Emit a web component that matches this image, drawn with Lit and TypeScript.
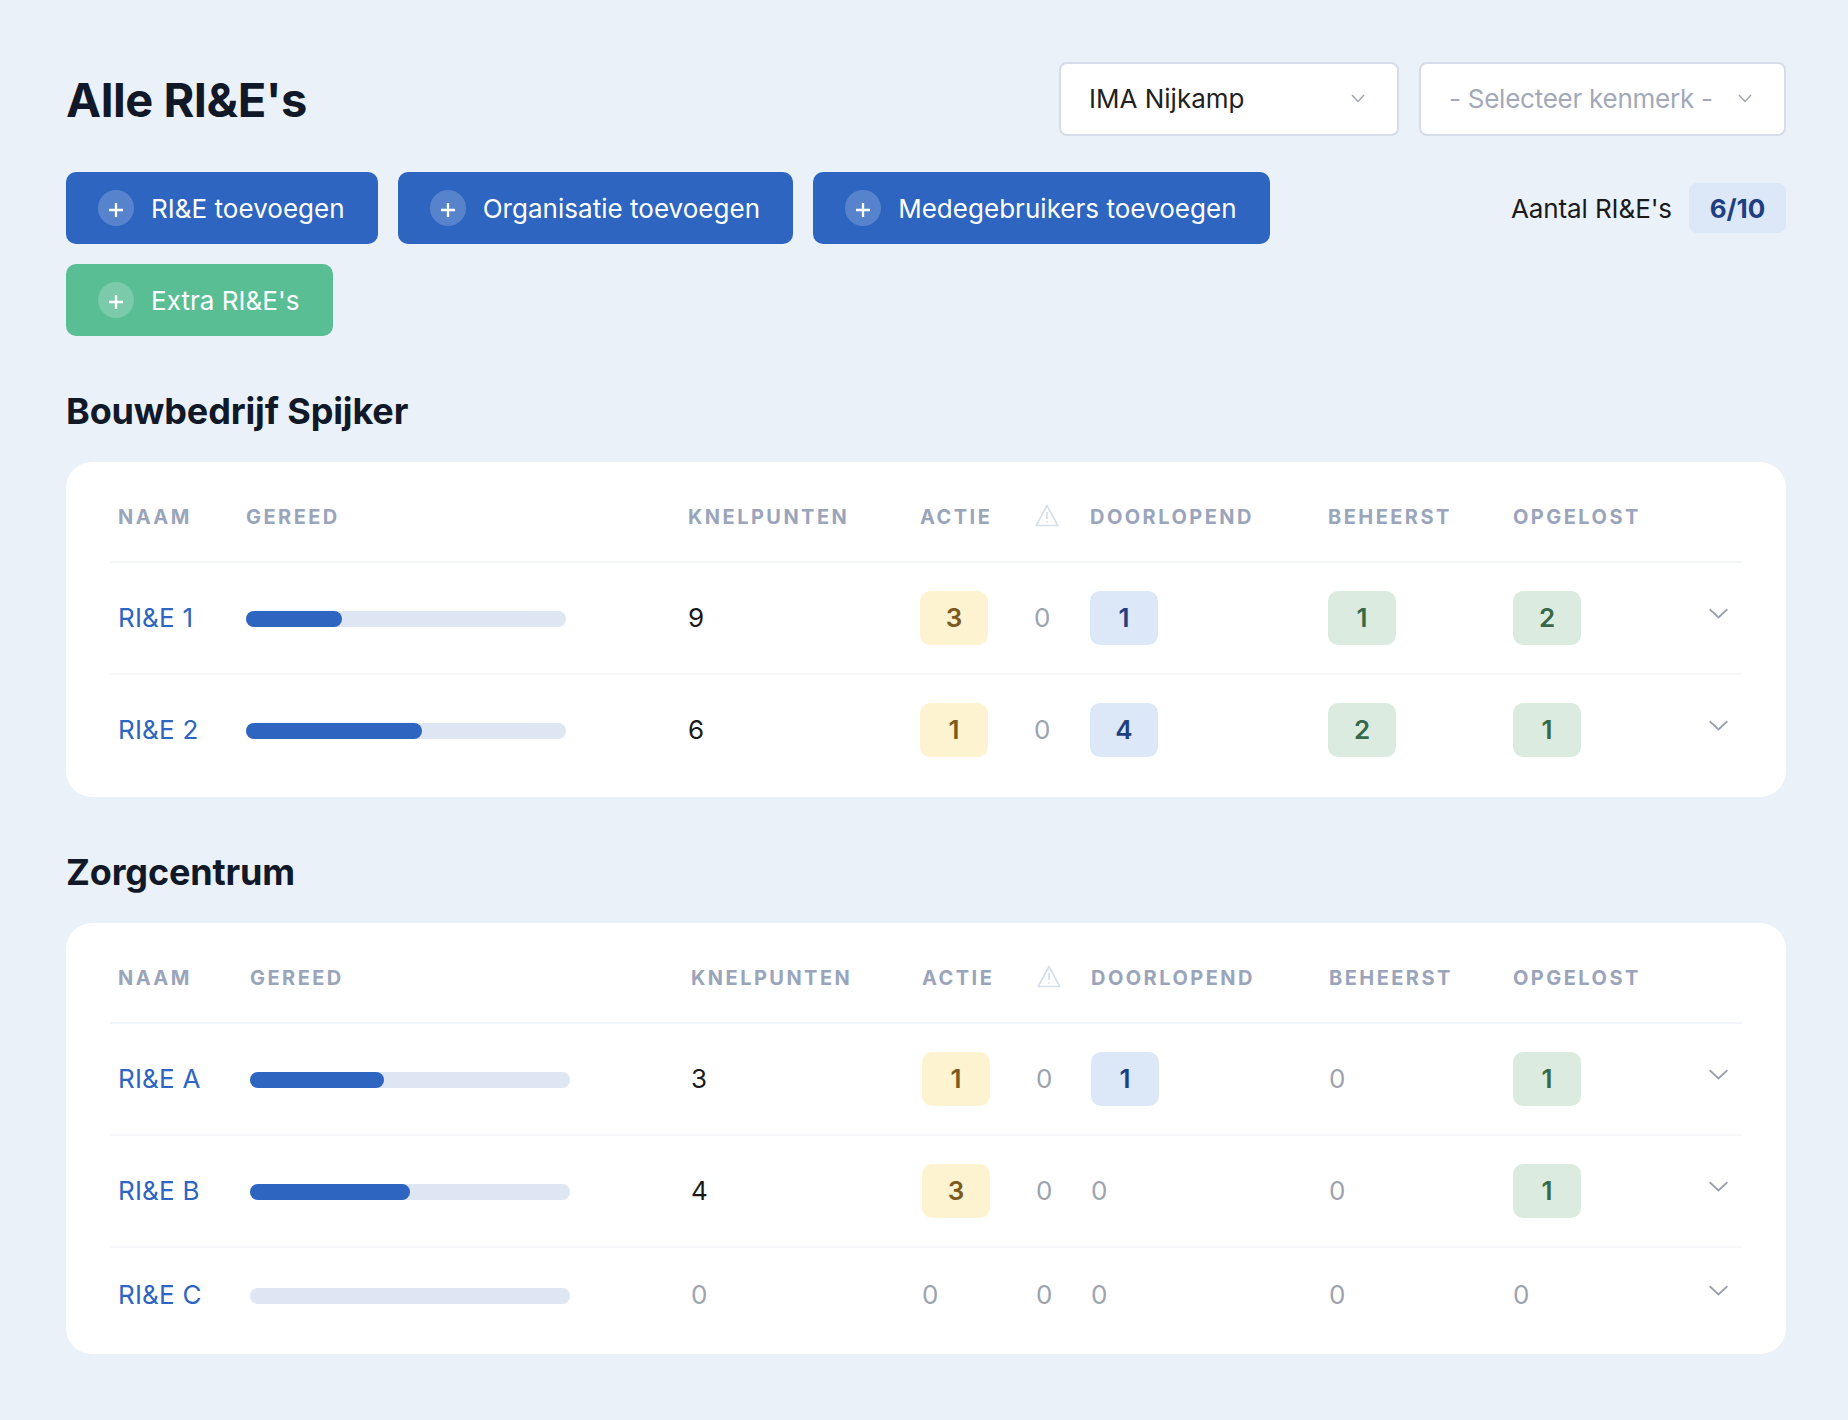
import { LitElement, css, html, nothing } from "lit";
import { customElement, property } from "lit/decorators.js";

type Tone = "yellow" | "blue" | "green";

interface Row {
  name: string;
  progress: number;
  knelpunten: number;
  actie: number;
  warn: number;
  doorlopend: number;
  beheerst: number;
  opgelost: number;
}

const chevron = html`<svg class="chev" viewBox="0 0 20 20" fill="none" stroke="currentColor" stroke-width="1.9">
  <path d="M.7 1.200 9.500 9.500l8.800-8.300" />
</svg>`;

@customElement("rie-table")
export class RieTable extends LitElement {
  static styles = css`
    :host {
      display: block;
      background: #fff;
      border-radius: 26px;
      padding: 9px 44px 12px;
    }

    table {
      width: 100%;
      table-layout: fixed;
      border-collapse: separate;
      border-spacing: 0;
    }

    th {
      height: 88px;
      padding: 2px 0 0 9px;
      text-align: left;
      font-size: 20px;
      font-weight: 700;
      letter-spacing: 2.45px;
      color: #9aa5bb;
      border-bottom: 2px solid #f1f5f9;
      white-space: nowrap;
    }

    th:first-child,
    td:first-child {
      padding-left: 8px;
    }

    td {
      padding: 28px 0 28px 9px;
      font-size: 26px;
      line-height: 38px;
      color: #1a1a1a;
      border-bottom: 2px solid #f7f8fa;
      vertical-align: middle;
    }

    tr:last-child td {
      border-bottom: 0;
    }

    .warn-icon {
      display: block;
      width: 24px;
      height: 23px;
      margin: -3px 0 0 1px;
    }

    td.name {
      color: #2d65c0;
      letter-spacing: 0.2px;
    }

    .bar {
      width: 320px;
      height: 16px;
      margin-top: 2px;
      border-radius: 8px;
      background: #dde6f2;
    }

    .fill {
      height: 100%;
      border-radius: 8px;
      background: #2d65c0;
    }

    .zero {
      color: #9ca3af;
    }

    .badge {
      display: flex;
      align-items: center;
      justify-content: center;
      width: 68px;
      height: 54px;
      border-radius: 10px;
      font-weight: 600;
    }

    .yellow {
      background: #fdf3d0;
      color: #7a5a1e;
    }

    .blue {
      background: #dce7f7;
      color: #1f3f80;
    }

    .green {
      background: #dbebdf;
      color: #36694a;
    }

    .chev {
      display: block;
      width: 20px;
      height: 20px;
      color: #9ca3af;
    }
  `;

  @property({ type: Array }) rows: Row[] = [];
  @property({ type: Array }) cols: number[] = [];

  private cell(value: number, tone?: Tone) {
    if (value === 0) return html`<span class="zero">0</span>`;
    if (!tone) return html`${value}`;
    return html`<div class="badge ${tone}">${value}</div>`;
  }

  render() {
    return html`
      <table>
        <colgroup>
          ${this.cols.map((w) => html`<col style="width: ${w}px" />`)}
        </colgroup>
        <thead>
          <tr>
            <th>NAAM</th>
            <th>GEREED</th>
            <th>KNELPUNTEN</th>
            <th>ACTIE</th>
            <th>
              <svg class="warn-icon" viewBox="0 0 24 23" fill="none" stroke="#d5deea" stroke-width="1.6">
                <path d="M12 1.500 22.800 21.500H1.200Z" stroke-linejoin="round" />
                <path d="M12 8v7M12 17.200v1.600" />
              </svg>
            </th>
            <th>DOORLOPEND</th>
            <th>BEHEERST</th>
            <th>OPGELOST</th>
            <th></th>
          </tr>
        </thead>
        <tbody>
          ${this.rows.map(
            (r) => html`
              <tr>
                <td class="name">${r.name}</td>
                <td>
                  <div class="bar">
                    ${r.progress > 0
                      ? html`<div class="fill" style="width: ${r.progress}%"></div>`
                      : nothing}
                  </div>
                </td>
                <td>${this.cell(r.knelpunten)}</td>
                <td>${this.cell(r.actie, "yellow")}</td>
                <td>${this.cell(r.warn)}</td>
                <td>${this.cell(r.doorlopend, "blue")}</td>
                <td>${this.cell(r.beheerst, "green")}</td>
                <td>${this.cell(r.opgelost, "green")}</td>
                <td>${chevron}</td>
              </tr>
            `
          )}
        </tbody>
      </table>
    `;
  }
}

@customElement("app-root")
export class AppRoot extends LitElement {
  static styles = css`
    :host {
      display: block;
      min-height: 1420px;
      box-sizing: border-box;
      padding: 62px 62px 66px 66px;
      background: #eaf1f9;
      font-family: Inter, "Noto Sans", sans-serif;
      color: #111827;
    }

    .top {
      display: flex;
      align-items: center;
      justify-content: space-between;
    }

    h1 {
      margin: 0;
      font-size: 47px;
      font-weight: 700;
      letter-spacing: -0.45px;
    }

    .selects {
      display: flex;
      gap: 20px;
    }

    .select {
      display: flex;
      align-items: center;
      justify-content: space-between;
      box-sizing: border-box;
      height: 74px;
      padding: 0 32px 2px 28px;
      background: #fff;
      border: 2px solid #d6dce8;
      border-radius: 8px;
      font-size: 26px;
      color: #222;
    }

    .select.person {
      width: 340px;
    }

    .select.kenmerk {
      width: 367px;
      color: #a3a9b8;
      letter-spacing: -0.25px;
    }

    .select svg {
      width: 14px;
      height: 9px;
      color: #9ca3af;
    }

    .actions {
      display: flex;
      align-items: flex-start;
      justify-content: space-between;
      margin-top: 36px;
    }

    .buttons {
      display: flex;
      flex: 1;
      flex-wrap: wrap;
      gap: 20px;
    }

    .btn {
      display: flex;
      align-items: center;
      gap: 17px;
      height: 72px;
      padding: 0 33px 0 32px;
      border-radius: 10px;
      background: #2d65c0;
      color: #fff;
      font-size: 26px;
      letter-spacing: 0.03px;
      white-space: nowrap;
    }

    .btn.extra {
      background: #5abe95;
    }

    .plus {
      display: flex;
      align-items: center;
      justify-content: center;
      width: 36px;
      height: 36px;
      border-radius: 50%;
      background: rgba(255, 255, 255, 0.2);
    }

    .plus svg {
      width: 14px;
      height: 14px;
      margin-top: 3px;
    }

    .count {
      display: flex;
      align-items: center;
      gap: 17px;
      margin-top: 11px;
      font-size: 26px;
      letter-spacing: -0.1px;
      color: #1a1a1a;
    }

    .count b {
      display: flex;
      align-items: center;
      justify-content: center;
      width: 97px;
      height: 50px;
      border-radius: 8px;
      background: #dce7f7;
      color: #1f3f80;
      font-weight: 700;
    }

    h2 {
      margin: 53px 0 29px;
      font-size: 36px;
      line-height: 44px;
      font-weight: 700;
      letter-spacing: -0.15px;
    }
  `;

  private firstRows: Row[] = [
    { name: "RI&E 1", progress: 30, knelpunten: 9, actie: 3, warn: 0, doorlopend: 1, beheerst: 1, opgelost: 2 },
    { name: "RI&E 2", progress: 55, knelpunten: 6, actie: 1, warn: 0, doorlopend: 4, beheerst: 2, opgelost: 1 },
  ];

  private secondRows: Row[] = [
    { name: "RI&E A", progress: 42, knelpunten: 3, actie: 1, warn: 0, doorlopend: 1, beheerst: 0, opgelost: 1 },
    { name: "RI&E B", progress: 50, knelpunten: 4, actie: 3, warn: 0, doorlopend: 0, beheerst: 0, opgelost: 1 },
    { name: "RI&E C", progress: 0, knelpunten: 0, actie: 0, warn: 0, doorlopend: 0, beheerst: 0, opgelost: 0 },
  ];

  private button(label: string, extra = false) {
    return html`<div class="btn ${extra ? "extra" : ""}">
      <span class="plus">
        <svg viewBox="0 0 14 14" fill="none" stroke="#fff" stroke-width="2.300"><path d="M7 0v14M0 7h14" /></svg>
      </span>
      ${label}
    </div>`;
  }

  render() {
    const selectChevron = html`<svg viewBox="0 0 14 9" fill="none" stroke="currentColor" stroke-width="1.4">
      <path d="M1 1l6 6.500L13 1" />
    </svg>`;
    return html`
      <div class="top">
        <h1>Alle RI&amp;E's</h1>
        <div class="selects">
          <div class="select person">IMA Nijkamp ${selectChevron}</div>
          <div class="select kenmerk">- Selecteer kenmerk - ${selectChevron}</div>
        </div>
      </div>

      <div class="actions">
        <div class="buttons">
          ${this.button("RI&E toevoegen")}
          ${this.button("Organisatie toevoegen")}
          ${this.button("Medegebruikers toevoegen")}
          ${this.button("Extra RI&E's", true)}
        </div>
        <div class="count">Aantal RI&amp;E's <b>6/10</b></div>
      </div>

      <h2>Bouwbedrijf Spijker</h2>
      <rie-table
        .rows=${this.firstRows}
        .cols=${[127, 442, 232, 114, 56, 238, 185, 196, 42]}
      ></rie-table>

      <h2>Zorgcentrum</h2>
      <rie-table
        .rows=${this.secondRows}
        .cols=${[131, 441, 231, 114, 55, 238, 184, 196, 42]}
      ></rie-table>
    `;
  }
}
